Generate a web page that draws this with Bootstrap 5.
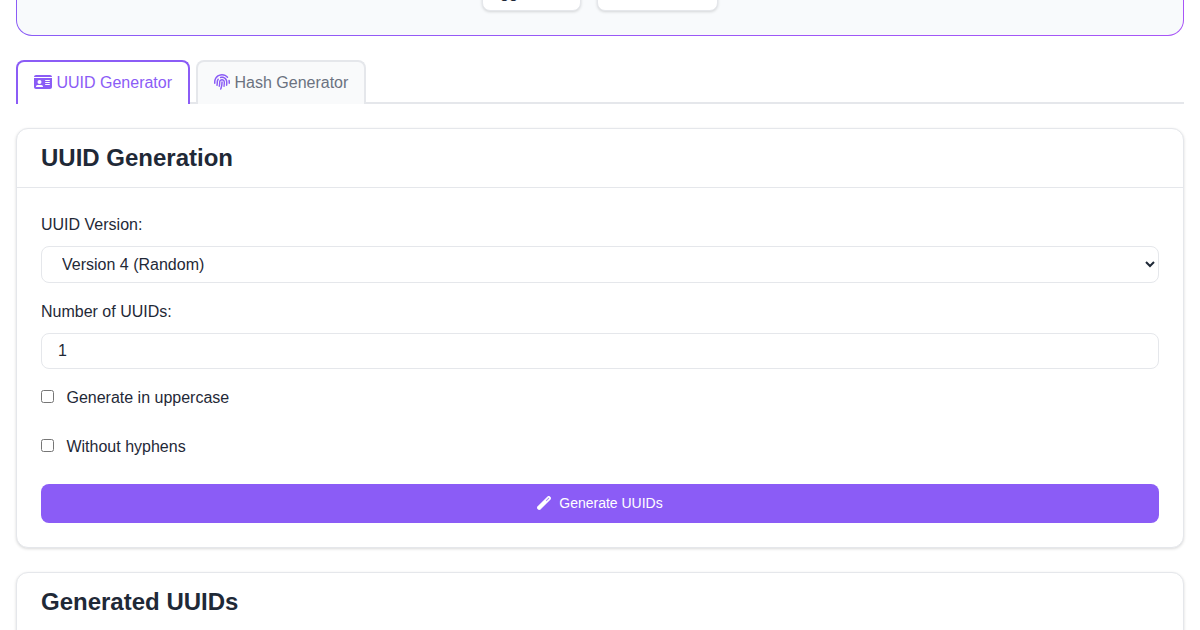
<!DOCTYPE html>
<html lang="en">
<head>
<meta charset="utf-8">
<meta name="viewport" content="width=device-width, initial-scale=1">
<title>UUID Generator</title>
<link href="https://cdn.jsdelivr.net/npm/bootstrap@5.3.0/dist/css/bootstrap.min.css" rel="stylesheet">
<script src="https://cdn.jsdelivr.net/npm/bootstrap@5.3.0/dist/js/bootstrap.bundle.min.js" defer></script>
<style>
  :root { --accent: #8b5cf6; --line: #e5e7eb; --ink: #1f2937; --soft: #f9fafb; }
  body { font-family: "Liberation Sans", Arial, sans-serif; color: var(--ink); background: #fff; overflow-x: hidden; }
  .hero { height: 36px; overflow: hidden; border: 1px solid transparent; border-top: 0; border-radius: 0 0 16px 16px;
    background: linear-gradient(#f8fafc, #f8fafc) padding-box, linear-gradient(90deg, #8b5cf6, #a855f7) border-box; }
  .hero-links { padding-bottom: 24px; }
  .hero-link { background: #fff; border: 1px solid var(--line); border-radius: 8px; color: var(--ink); padding: 5px 17px; line-height: 24px; box-shadow: 0 1px 3px rgba(0,0,0,.15); text-decoration: none; }
  .hero-link.narrow { width: 99px; }
  .hero-link.wide { width: 121px; }
  .tool-tabs { border-bottom: 2px solid var(--line); gap: 6px; }
  .tool-tabs .nav-link { margin-bottom: -2px; padding: 8px 16px; height: 44px; line-height: 26px; border: 2px solid var(--line); border-bottom: 0; border-radius: 8px 8px 0 0; background: var(--soft); color: #6b7280; }
  .tool-tabs .nav-link.active { background: #fff; color: var(--accent); border-color: var(--accent); }
  .tool-tabs svg { fill: var(--accent); height: 16px; vertical-align: -2px; }
  .panel { border: 1px solid var(--line); border-radius: 12px; box-shadow: 0 1px 3px rgba(0,0,0,.15); color: var(--ink); }
  .panel > .card-header { background: none; border-color: var(--line); padding: 14px 24px 15px; }
  .panel h2 { font-size: 24px; line-height: 29px; font-weight: 700; margin: 0; }
  .panel > .card-body { padding: 24px; }
  .field { display: block; width: 100%; border: 1px solid var(--line); border-radius: 8px; background: #fff; color: var(--ink); padding: 0 16px; height: 36px; }
  select.field { height: 37px; padding: 0 0 0 16px; }
  .field-label { display: block; line-height: 26px; margin-bottom: 8px; }
  .tick-row { line-height: 25px; height: 25px; }
  .tick { width: 13px; height: 13px; margin: 0 8px 0 0; vertical-align: baseline; }
  .btn-generate { background: var(--accent); color: #fff; border: 0; border-radius: 8px; font-size: 14px; line-height: 21px; padding: 9px 16px; margin-top: 25px; }
  .btn-generate svg { margin-bottom: 2px; }
  .btn-generate:hover { background: #7c3aed; color: #fff; }
</style>
</head>
<body>
<div class="container-fluid px-3">
  <header class="hero mb-4 d-flex flex-column justify-content-end">
    <div class="hero-links d-flex justify-content-center gap-3">
      <a href="#" class="hero-link narrow">gg</a>
      <a href="#" class="hero-link wide">&nbsp;</a>
    </div>
  </header>

  <ul class="nav tool-tabs mb-4">
    <li><a href="#uuid" class="nav-link active" aria-current="page"><svg viewBox="0 0 576 512" aria-hidden="true"><path d="M0 96l576 0c0-35.3-28.7-64-64-64L64 32C28.7 32 0 60.7 0 96zm0 32L0 416c0 35.3 28.7 64 64 64l448 0c35.3 0 64-28.7 64-64l0-288L0 128zM64 405.3c0-29.5 23.9-53.3 53.3-53.3l117.3 0c29.5 0 53.3 23.9 53.3 53.3c0 5.9-4.8 10.7-10.7 10.7L74.7 416c-5.9 0-10.7-4.8-10.7-10.7zM176 192a64 64 0 1 1 0 128 64 64 0 1 1 0-128zm176 16c0-8.8 7.2-16 16-16l128 0c8.8 0 16 7.2 16 16s-7.2 16-16 16l-128 0c-8.8 0-16-7.2-16-16zm0 64c0-8.8 7.2-16 16-16l128 0c8.8 0 16 7.2 16 16s-7.2 16-16 16l-128 0c-8.8 0-16-7.2-16-16zm0 64c0-8.8 7.2-16 16-16l128 0c8.8 0 16 7.2 16 16s-7.2 16-16 16l-128 0c-8.8 0-16-7.2-16-16z"/></svg> UUID Generator</a></li>
    <li><a href="#hash" class="nav-link"><svg viewBox="0 0 512 512" aria-hidden="true"><path d="M48 256C48 141.1 141.1 48 256 48c63.1 0 119.6 28.1 157.8 72.5c8.6 10.1 23.8 11.2 33.8 2.6s11.2-23.8 2.6-33.8C403.3 34.6 333.7 0 256 0C114.6 0 0 114.6 0 256l0 40c0 13.3 10.7 24 24 24s24-10.7 24-24l0-40zm458.5-52.9c-2.7-13-15.5-21.3-28.4-18.5s-21.3 15.5-18.5 28.4c2.9 13.9 4.5 28.3 4.5 43.1l0 40c0 13.3 10.7 24 24 24s24-10.7 24-24l0-40c0-18.1-1.9-35.8-5.5-52.9zM256 80c-19 0-37.4 3-54.5 8.6c-15.2 5-18.7 23.7-8.3 35.9c7.1 8.3 18.8 10.8 29.4 7.9c10.6-2.9 21.8-4.4 33.4-4.4c70.7 0 128 57.3 128 128l0 24.9c0 25.2-1.5 50.3-4.4 75.3c-1.7 14.6 9.4 27.8 24.2 27.8c11.8 0 21.9-8.6 23.3-20.3c3.3-27.4 5-55 5-82.7l0-24.9c0-97.2-78.8-176-176-176zM150.7 148.7c-9.1-10.6-25.3-11.4-33.9-.4C93.7 178 80 215.4 80 256l0 24.9c0 24.2-2.6 48.4-7.8 71.9C68.8 368.4 80.1 384 96.1 384c10.5 0 19.9-7 22.2-17.3c6.4-28.1 9.7-56.8 9.7-85.8l0-24.9c0-27.2 8.5-52.4 22.9-73.1c7.2-10.4 8-24.6-.2-34.2zM256 160c-53 0-96 43-96 96l0 24.9c0 35.9-4.6 71.5-13.8 106.1c-3.8 14.3 6.7 29 21.5 29c9.5 0 17.9-6.2 20.4-15.4c10.5-39 15.9-79.2 15.9-119.7l0-24.9c0-28.7 23.3-52 52-52s52 23.3 52 52l0 24.9c0 36.3-3.5 72.4-10.4 107.9c-2.7 13.9 7.7 27.2 21.8 27.2c10.2 0 19-7 21-17c7.7-38.8 11.6-78.3 11.6-118.1l0-24.9c0-53-43-96-96-96zm24 96c0-13.3-10.7-24-24-24s-24 10.7-24 24l0 24.9c0 59.9-11 119.3-32.5 175.2l-5.9 15.3c-4.8 12.4 1.4 26.3 13.8 31s26.3-1.4 31-13.8l5.9-15.3C267.9 411.9 280 346.7 280 280.9l0-24.9z"/></svg> Hash Generator</a></li>
  </ul>

  <section class="card panel mb-4" id="uuid">
    <div class="card-header"><h2>UUID Generation</h2></div>
    <form class="card-body">
      <div class="mb-3">
        <label class="field-label" for="version">UUID Version:</label>
        <select class="field" id="version"><option>Version 4 (Random)</option></select>
      </div>
      <div class="mb-3">
        <label class="field-label" for="count">Number of UUIDs:</label>
        <input class="field" id="count" type="text" inputmode="numeric" value="1">
      </div>
      <div class="tick-row mb-4"><input class="tick" type="checkbox" id="upper"> <label for="upper">Generate in uppercase</label></div>
      <div class="tick-row"><input class="tick" type="checkbox" id="plain"> <label for="plain">Without hyphens</label></div>
      <button type="button" class="btn btn-generate w-100 d-flex justify-content-center align-items-center gap-2"><svg width="14" height="14" viewBox="0 0 512 512" fill="currentColor" stroke="currentColor" stroke-width="16" aria-hidden="true"><path d="M14.1 463.3c-18.7-18.7-18.7-49.1 0-67.9L395.4 14.1c18.7-18.7 49.1-18.7 67.9 0l34.6 34.6c18.7 18.7 18.7 49.1 0 67.9L116.5 497.9c-18.7 18.7-49.1 18.7-67.9 0L14.1 463.3zM347.6 187.6l105-105L429.4 59.3l-105 105 23.3 23.3z"/></svg>Generate UUIDs</button>
    </form>
  </section>

  <section class="card panel">
    <div class="card-header"><h2>Generated UUIDs</h2></div>
    <div class="card-body"></div>
  </section>
</div>
</body>
</html>
